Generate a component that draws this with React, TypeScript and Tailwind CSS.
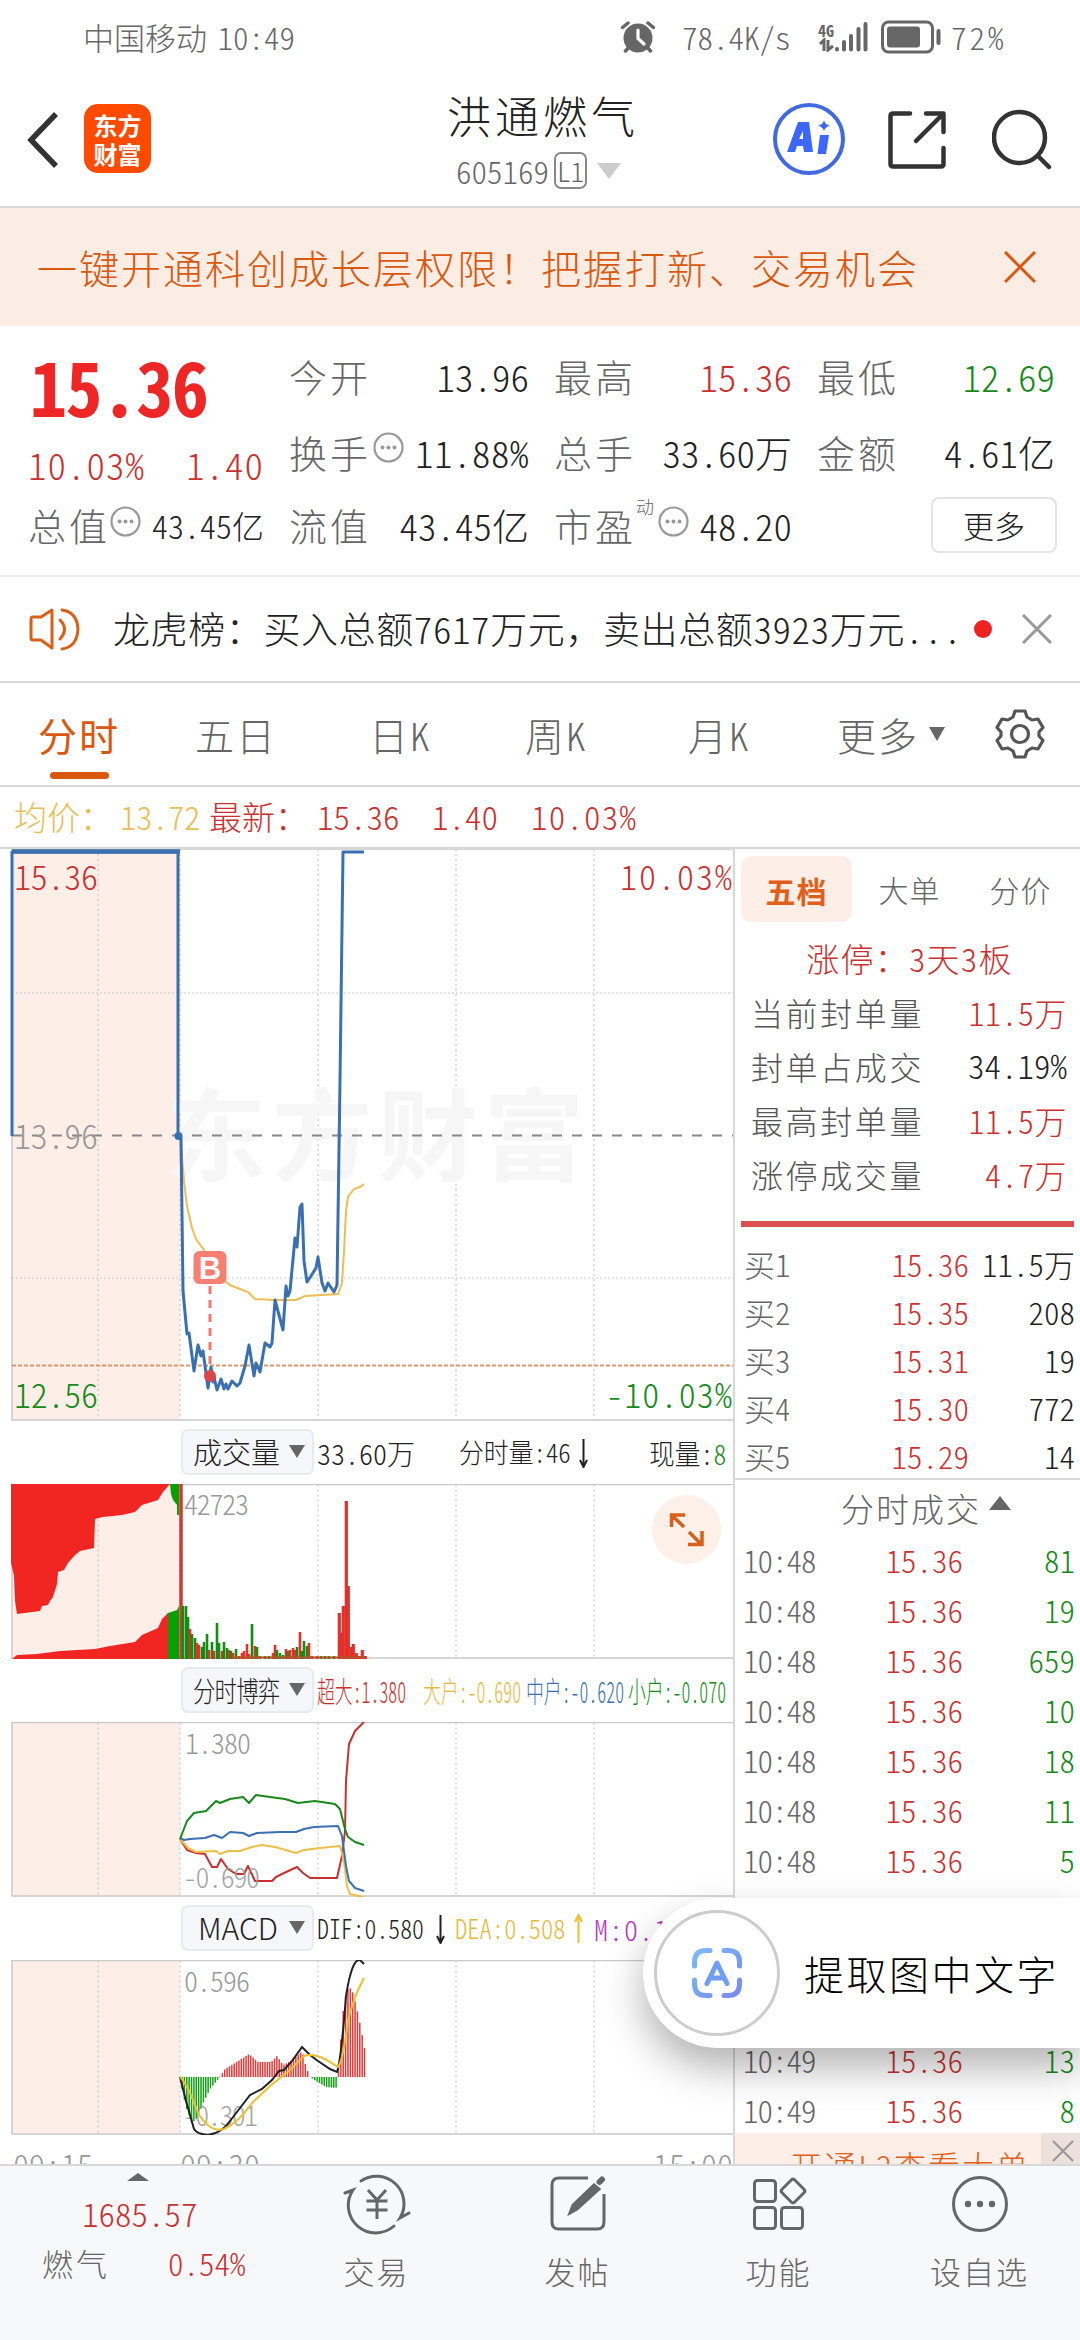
import type { ReactNode } from "react";

type Point = [number, number];

const RED = "#c8312f";
const GREEN = "#16891a";
const BLUE = "#3a70b0";
const YELLOW = "#ecbf4a";
const GRID = "#c9c9c9";

const toPoints = (pts: Point[]) => pts.map((p) => p.join(",")).join(" ");

// main price line
const priceLine: Point[] = [
  [12, 1135], [12, 851], [178, 851], [178, 1135], [181, 1137], [183, 1290], [187, 1333], [189, 1332],
  [194, 1370], [198, 1344], [201, 1355], [203, 1350], [208, 1387], [211, 1366], [213, 1381], [214, 1376],
  [217, 1389], [221, 1378], [224, 1388], [226, 1383], [228, 1388], [232, 1380], [237, 1385], [240, 1382],
  [245, 1365], [249, 1344], [254, 1375], [256, 1362], [260, 1371], [265, 1342], [270, 1346], [272, 1342],
  [275, 1299], [283, 1329], [286, 1285], [288, 1295], [290, 1290], [295, 1237], [297, 1246], [300, 1206],
  [302, 1203], [304, 1260], [307, 1281], [311, 1275], [316, 1267], [318, 1256], [322, 1282], [325, 1290],
  [328, 1282], [334, 1291], [337, 1284], [340, 1080], [343, 851], [364, 851],
];

const avgLine: Point[] = [
  [181, 1145], [184, 1180], [187, 1205], [192, 1227], [196, 1238], [204, 1249], [212, 1264], [222, 1278],
  [230, 1284], [240, 1288], [248, 1291], [255, 1298], [275, 1299], [296, 1299], [305, 1295], [338, 1293],
  [342, 1282], [344, 1250], [346, 1210], [348, 1196], [354, 1188], [360, 1186], [364, 1183],
];

// call auction blocks in the volume chart
const auctionTop: Point[] = [
  [11, 1483], [11, 1562], [14, 1575], [15, 1600], [17, 1613], [40, 1610], [42, 1605], [48, 1604],
  [50, 1600], [53, 1596], [57, 1583], [58, 1571], [64, 1569], [68, 1562], [74, 1555], [80, 1550],
  [94, 1547], [95, 1518], [103, 1516], [122, 1514], [135, 1511], [142, 1504], [158, 1499], [163, 1491],
  [170, 1483],
];
const auctionBottom: Point[] = [
  [12, 1658], [17, 1654], [37, 1653], [60, 1650], [95, 1648], [110, 1645], [135, 1641], [142, 1634],
  [158, 1627], [162, 1618], [168, 1612], [168, 1658],
];

const volumeBars: [number, number, "r" | "g"][] = [
  [183, 1605, "g"], [186, 1605, "g"], [188, 1616, "g"], [190, 1628, "r"], [192, 1633, "g"], [195, 1637, "g"],
  [197, 1642, "r"], [199, 1644, "r"], [202, 1646, "g"], [204, 1641, "g"], [207, 1633, "g"], [209, 1649, "r"],
  [212, 1641, "g"], [214, 1650, "r"], [217, 1622, "g"], [219, 1642, "g"], [222, 1650, "r"], [224, 1641, "g"],
  [227, 1647, "g"], [229, 1649, "r"], [231, 1650, "g"], [233, 1652, "r"], [236, 1648, "g"], [239, 1655, "r"],
  [242, 1652, "r"], [244, 1650, "r"], [247, 1643, "r"], [249, 1653, "r"], [252, 1623, "g"], [255, 1645, "r"],
  [257, 1646, "g"], [260, 1655, "r"], [265, 1655, "g"], [269, 1655, "g"], [273, 1652, "r"], [275, 1644, "r"],
  [277, 1649, "g"], [280, 1652, "g"], [283, 1654, "g"], [286, 1648, "r"], [288, 1650, "g"], [290, 1649, "r"],
  [293, 1647, "r"], [295, 1649, "r"], [297, 1646, "g"], [300, 1631, "r"], [302, 1650, "g"], [304, 1640, "g"],
  [307, 1645, "g"], [309, 1642, "r"], [312, 1655, "r"], [317, 1655, "r"], [321, 1655, "g"], [325, 1655, "g"],
  [329, 1655, "g"], [334, 1655, "g"], [339, 1612, "r"], [341, 1632, "r"], [343, 1605, "r"], [346, 1500, "r"],
  [348, 1585, "r"], [351, 1646, "r"], [353, 1643, "r"], [356, 1652, "r"], [359, 1655, "r"], [362, 1649, "r"],
  [365, 1655, "r"],
];

const smallLine: Point[] = [
  [180, 1838], [187, 1820], [194, 1812], [206, 1810], [216, 1800], [220, 1802], [230, 1798], [243, 1796],
  [249, 1802], [256, 1794], [270, 1796], [285, 1798], [298, 1802], [315, 1800], [335, 1803], [340, 1808],
  [345, 1828], [348, 1836], [355, 1841], [364, 1844],
];
const midLine: Point[] = [
  [180, 1837], [184, 1839], [190, 1838], [205, 1837], [214, 1834], [222, 1837], [230, 1831], [243, 1832],
  [249, 1835], [257, 1832], [280, 1831], [296, 1831], [304, 1828], [314, 1826], [338, 1825], [342, 1835],
  [346, 1865], [349, 1880], [355, 1887], [364, 1890],
];
const bigLine: Point[] = [
  [180, 1838], [188, 1847], [196, 1851], [216, 1850], [220, 1853], [228, 1850], [240, 1850], [252, 1846],
  [262, 1844], [275, 1846], [296, 1852], [304, 1849], [320, 1847], [340, 1845], [344, 1860], [347, 1885],
  [350, 1893], [364, 1896],
];
const superLine: Point[] = [
  [180, 1838], [187, 1849], [196, 1852], [205, 1853], [212, 1866], [217, 1866], [221, 1858], [228, 1868],
  [236, 1873], [244, 1873], [248, 1865], [255, 1880], [272, 1880], [276, 1876], [284, 1872], [297, 1866],
  [303, 1872], [310, 1877], [337, 1877], [342, 1855], [345, 1830], [346, 1780], [349, 1743], [355, 1730],
  [364, 1721],
];

const difLine =
  "M180 2076 L186 2100 194 2128 Q197 2133 208 2134 Q222 2132 230 2120 L240 2107 250 2094 262 2088 272 2079 279 2070 284 2069 292 2060 302 2046 310 2054 318 2060 330 2068 337 2071 Q341 2060 346 1995 Q352 1957 360 1959 L364 1963";
const deaLine =
  "M180 2076 Q188 2084 198 2112 Q210 2132 224 2128 Q238 2122 252 2102 L270 2085 290 2069 304 2055 Q312 2052 325 2058 L338 2066 Q343 2060 348 2020 Q353 1997 364 1977";

// envelope of the MACD histogram, bars are sampled from it
const macdKeys: Point[] = [
  [182, 2088], [186, 2106], [192, 2122], [198, 2116], [203, 2102], [210, 2088], [219, 2077], [225, 2068],
  [235, 2062], [249, 2053], [258, 2061], [271, 2061], [277, 2055], [283, 2064], [291, 2060], [302, 2050],
  [306, 2066], [310, 2076], [316, 2080], [326, 2086], [336, 2087], [339, 2060], [344, 2000], [349, 1985],
  [353, 1992], [358, 2013], [361, 2028], [365, 2050],
];

const macdBars: Point[] = [];
for (let x = 182; x <= 364.5; x += 2.37) {
  const i = Math.max(1, macdKeys.findIndex((k) => k[0] >= x));
  const [x0, y0] = macdKeys[i - 1];
  const [x1, y1] = macdKeys[i];
  macdBars.push([x, y0 + ((x - x0) / (x1 - x0)) * (y1 - y0)]);
}

const bids = [
  ["买1", "15.36", "11.5万"],
  ["买2", "15.35", "208"],
  ["买3", "15.31", "19"],
  ["买4", "15.30", "772"],
  ["买5", "15.29", "14"],
];

const ticks = [
  ["10:48", "81"],
  ["10:48", "19"],
  ["10:48", "659"],
  ["10:48", "10"],
  ["10:48", "18"],
  ["10:48", "11"],
  ["10:48", "5"],
  ["10:48", ""],
  ["10:49", ""],
  ["10:49", ""],
  ["10:49", "13"],
  ["10:49", "8"],
];

function StatusBar() {
  return (
    <div className="h-[74px] flex items-center pl-[83px] text-[31px] text-[#666]">
      <div className="w-[538px] whitespace-nowrap">中国移动<span className="-ml-[5px]"> 10:49</span></div>
      <svg className="w-[34px] h-[32px] shrink-0" viewBox="0 0 34 32" fill="none">
        <circle cx="17" cy="17" r="14.5" fill="#666" />
        <path d="M1.5 6.500 L7 2M32.500 6.500 L27 2M8 26 L4.500 30M26 26 L29.500 30" stroke="#666" strokeWidth="3.500" strokeLinecap="round" />
        <path d="M17 9 V17.500 L23 23" stroke="#fff" strokeWidth="3.200" strokeLinecap="round" />
      </svg>
      <div className="w-[136px] pl-[27px] whitespace-nowrap">78.4K/s</div>
      <div className="w-[26px] pl-[27px] box-content">
        <div className="text-[16px] leading-[15px] font-bold">4G</div>
        <svg className="w-[18px] h-[14px]" viewBox="0 0 18 14" fill="none" stroke="#666" strokeWidth="3">
          <path d="M2 6 L6 2 V13M10 2 V12 L15 8" />
        </svg>
      </div>
      <svg className="w-[34px] h-[32px] -ml-[10px] shrink-0" viewBox="0 0 34 32" fill="none" stroke="#666" strokeWidth="4" strokeLinecap="round">
        <path d="M3 28 V28.500M10 21 V28.500M17 15 V28.500M24.500 8 V28.500M31.500 3 V28.500" />
      </svg>
      <svg className="ml-[13px] w-[60px] h-[34px] shrink-0" viewBox="0 0 60 34" fill="none">
        <rect x="1.500" y="2" width="50" height="30" rx="6" stroke="#666" strokeWidth="3" />
        <rect x="6" y="6.500" width="33" height="21" rx="3" fill="#666" />
        <path d="M57.500 11 V23" stroke="#666" strokeWidth="4" strokeLinecap="round" />
      </svg>
      <div className="pl-[10px] whitespace-nowrap tracking-[3px]">72%</div>
    </div>
  );
}

function Header() {
  return (
    <div className="h-[134px] flex items-center border-b-2 border-[#d8d8d8] pl-[26px] pb-[3px] shrink-0">
      <svg className="w-[34px] h-[58px] shrink-0 mt-[2px]" viewBox="0 0 34 58" fill="none" stroke="#333" strokeWidth="5.500">
        <path d="M30 3 L5 29 L30 55" />
      </svg>
      <div className="ml-[24px] w-[67px] h-[69px] rounded-[14px] bg-[#ff4a00] text-white text-[24px] leading-[29px] font-bold flex flex-col items-center justify-center">
        <span>东方</span>
        <span>财富</span>
      </div>
      <div className="ml-[296px] w-[190px] flex flex-col">
        <div className="text-[44px] leading-[54px] tracking-[4px] whitespace-nowrap text-[#222]">洪通燃气</div>
        <div className="h-[38px] mt-[10px] ml-[9px] flex items-center text-[31px] text-[#666]">
          <span className="leading-[38px]">605169</span>
          <span className="ml-[5px] w-[33px] h-[37px] border-2 border-[#888] rounded-[7px] text-[27px] leading-[33px] text-center">L1</span>
          <span className="ml-[10px] border-x-[12px] border-t-[16px] border-x-transparent border-t-[#ccc]" />
        </div>
      </div>
      <svg className="ml-[136px] w-[72px] h-[72px] shrink-0" viewBox="0 0 72 72" fill="none">
        <circle cx="36" cy="36" r="34" stroke="#4169e0" strokeWidth="4" />
        <path d="M25 19 H36 L40 49 H31 L30 43 H24 L22 49 H14 Z M30 28 L26 36 H30 Z" fill="#3d67fb" fillRule="evenodd" strokeLinejoin="round" />
        <path d="M47 32 H56 L53 51 H44.500 Z" fill="#3d67fb" />
        <path d="M51 17 Q52 22 57 22.500 Q52 24 51 28 Q50 24 45 22.500 Q50 22 51 17Z" fill="#3d67fb" />
      </svg>
      <svg className="ml-[43px] w-[58px] h-[60px] shrink-0 mt-[2px]" viewBox="0 0 58 60" fill="none" stroke="#333" strokeWidth="4.500" strokeLinecap="round" strokeLinejoin="round">
        <path d="M22 3.500 H5 Q2.500 3.500 2.500 6 V54 Q2.500 56.500 5 56.500 H53 Q55.500 56.500 55.500 54 V38M38 3.500 H55.500 V22M54 5 L28 31" />
      </svg>
      <svg className="ml-[46px] w-[60px] h-[62px] shrink-0" viewBox="0 0 60 62" fill="none" stroke="#333" strokeWidth="4.500" strokeLinecap="round">
        <circle cx="27.500" cy="29.500" r="25.500" />
        <path d="M46 48 L57 59" />
      </svg>
    </div>
  );
}

function Dots() {
  return (
    <svg className="w-[31px] h-[31px] shrink-0 -mt-[8px]" viewBox="0 0 31 31" fill="#999">
      <circle cx="15.500" cy="15.500" r="14" fill="none" stroke="#999" strokeWidth="2.200" />
      <circle cx="9.500" cy="15.500" r="2" />
      <circle cx="15.500" cy="15.500" r="2" />
      <circle cx="21.500" cy="15.500" r="2" />
    </svg>
  );
}

function Cell({ label, children, color = "text-[#222]" }: { label: string; children: ReactNode; color?: string }) {
  return (
    <div className="flex items-center justify-between">
      <span className="text-[38px] tracking-[3px] text-[#666]">{label}</span>
      <span className={color}>{children}</span>
    </div>
  );
}

function Quote() {
  return (
    <div className="h-[251px] border-b-2 border-[#ececec] pt-[12px] pl-[28px] grid grid-cols-[236px_240px_238px_238px] gap-x-[25px] grid-rows-[76px_75px_72px] text-[37px] leading-[48px] text-[#222] whitespace-nowrap">
      <div className="row-span-2 flex flex-col">
        <div className="h-[98px] pl-[2px] text-[74px] leading-[94px] tracking-[-1.500px] font-bold text-[#ee2726]">15.36</div>
        <div className="mt-[4px] flex justify-between text-[#c8312f] tracking-[1px]">
          <span>10.03%</span>
          <span>1.40</span>
        </div>
      </div>
      <Cell label="今开">13.96</Cell>
      <Cell label="最高" color="text-[#c8312f]">15.36</Cell>
      <Cell label="最低" color="text-[#16891a]">12.69</Cell>
      <div className="flex items-center">
        <span className="text-[38px] tracking-[3px] text-[#666]">换手</span>
        <span className="ml-[2px]"><Dots /></span>
        <span className="ml-auto tracking-[0.500px]">11.88%</span>
      </div>
      <Cell label="总手">33.60万</Cell>
      <Cell label="金额">4.61亿</Cell>
      <div className="flex items-center">
        <span className="text-[38px] tracking-[3px] text-[#666]">总值</span>
        <Dots />
        <span className="text-[32px] ml-auto">43.45亿</span>
      </div>
      <Cell label="流值">43.45亿</Cell>
      <div className="flex items-center">
        <span className="text-[38px] tracking-[3px] text-[#666]">市盈</span>
        <span className="text-[18px] text-[#666] -mt-[38px]">动</span>
        <span className="ml-[4px]"><Dots /></span>
        <span className="ml-auto">48.20</span>
      </div>
      <div className="flex items-center justify-end">
        <div className="w-[126px] h-[56px] mr-[-2px] border-2 border-[#e4e4e4] rounded-[8px] text-center text-[31px] leading-[52px] text-[#222]">更多</div>
      </div>
    </div>
  );
}

function News() {
  return (
    <div className="h-[106px] border-b-2 border-[#d8d8d8] flex items-center pl-[29px]">
      <svg className="w-[52px] h-[44px] shrink-0" viewBox="0 0 52 44" fill="none" stroke="#d9601a" strokeWidth="3" strokeLinejoin="round" strokeLinecap="round">
        <path d="M23 3 L12 10 H4 Q2 10 2 12 V31 Q2 33 4 33 H12 L23 41 Z" />
        <path d="M31 13 Q40 22 31 32M33 3 Q48 5 49 22 Q48 40 33 42" />
      </svg>
      <div className="ml-[32px] w-[849px] whitespace-nowrap text-[37px] tracking-[0.600px] text-[#222]">
        龙虎榜：买入总额7617万元<span className="[font-feature-settings:normal]">，</span>卖出总额3923万元...
      </div>
      <div className="ml-[12px] size-[18px] rounded-full bg-[#ee2320] shrink-0" />
      <svg className="ml-[30px] w-[30px] h-[30px] shrink-0" viewBox="0 0 30 30" stroke="#999" strokeWidth="3">
        <path d="M1 1 L29 29M29 1 L1 29" />
      </svg>
    </div>
  );
}

function Tabs() {
  return (
    <div className="h-[104px] border-b-2 border-[#d8d8d8] flex pl-[38px] text-[39px] leading-[52px] text-[#666] whitespace-nowrap tracking-[2px]">
      <div className="w-[157px] pt-[25px] text-[#d9570f]">
        <span className="font-normal">分时</span>
        <div className="ml-[12px] mt-[12px] w-[59px] h-[7px] rounded-full bg-[#d9570f]" />
      </div>
      <div className="w-[174px] pt-[25px]">五日</div>
      <div className="w-[156px] pt-[25px]">日K</div>
      <div className="w-[163px] pt-[25px]">周K</div>
      <div className="w-[149px] pt-[25px]">月K</div>
      <div className="w-[157px] flex pt-[25px]">
        更多
        <span className="ml-[10px] mt-[19px] h-0 border-x-[8px] border-t-[14px] border-x-transparent border-t-[#666]" />
      </div>
      <svg className="mt-[25px] w-[52px] h-[52px]" viewBox="0 0 52 52" fill="none" stroke="#555" strokeWidth="3.200" strokeLinejoin="round">
        <path d="M21 3 H31 L33 9 L38 12 L44 11 L49 19.500 L45 24 V28 L49 32.500 L44 41 L38 40 L33 43 L31 49 H21 L19 43 L14 40 L8 41 L3 32.500 L7 28 V24 L3 19.500 L8 11 L14 12 L19 9 Z" />
        <circle cx="26" cy="26" r="8.500" />
      </svg>
    </div>
  );
}

function Frame({ top, bottom }: { top: number; bottom: number }) {
  return (
    <>
      <rect x="12" y={top} width="168" height={bottom - top} fill="#fdeee7" />
      <path d={[98, 180, 318, 456, 594].map((x) => `M${x} ${top} V${bottom}`).join("")} stroke={GRID} strokeWidth="1.200" strokeDasharray="2 3" />
      <path d={`M733 ${top} H12 V${bottom} H733`} fill="none" stroke={GRID} strokeWidth="1.500" />
    </>
  );
}

function IndicatorBar({ name, small, children }: { name: string; small?: boolean; children: ReactNode }) {
  return (
    <div className="h-[63px] pl-[181px] flex items-center text-[29px] text-[#222] whitespace-nowrap">
      <div className="w-[133px] h-[46px] -mt-[2px] shrink-0 rounded-[7px] border-2 border-[#e8eaee] bg-[#f6f7fa] flex items-center justify-between pl-[10px] pr-[7px]">
        <span className={small ? "inline-block w-[88px] text-[28px] tracking-[-1px] origin-left scale-x-[0.8]" : "text-[29px]"}>{name}</span>
        <span className="border-x-[8px] border-t-[13px] border-x-transparent border-t-[#666] shrink-0" />
      </div>
      {children}
    </div>
  );
}

function Arrow({ up, color }: { up?: boolean; color: string }) {
  return (
    <svg className="w-[9px] h-[30px] shrink-0" viewBox="0 0 9 30" fill="none" stroke={color} strokeWidth="2">
      <path d={up ? "M4.500 29 V1M1 8 L4.500 1 L8 8" : "M4.500 1 V29M1 22 L4.500 29 L8 22"} />
    </svg>
  );
}

function Narrow({ w, color, children }: { w: string; color: string; children: ReactNode }) {
  return (
    <div className={`${w} shrink-0`}>
      <span className={`inline-block origin-left scale-x-[0.615] ${color}`}>{children}</span>
    </div>
  );
}

function Charts() {
  return (
    <div className="w-[735px] shrink-0 border-r-2 border-[#d8d8d8]">
      <svg className="block w-[735px] h-[572px]" viewBox="0 848 735 572" fill="none">
        <Frame top={848} bottom={1419} />
        <text x="166" y="1172" fontSize="100" fontWeight="700" fill="#f6f6f6" textLength="418">东方财富</text>
        <path d="M12 992 H733M12 1277 H733" stroke={GRID} strokeWidth="1.200" strokeDasharray="2 2" />
        <path d="M12 1134.500 H733" stroke="#888" strokeWidth="2" strokeDasharray="10 10" />
        <path d="M12 1364.500 H733" stroke="#e0966c" strokeWidth="2" strokeDasharray="4 2" />
        <polyline points={toPoints(avgLine)} stroke="#efbd55" strokeWidth="2" />
        <polyline points={toPoints(priceLine)} stroke={BLUE} strokeWidth="3" strokeLinejoin="round" />
        <path d="M12 850.500 H180" stroke={BLUE} strokeWidth="4.500" />
        <circle cx="178.500" cy="1135" r="4" fill={BLUE} />
        <path d="M210 1285 V1368" stroke="#ee7a6c" strokeWidth="3" strokeDasharray="8 6" />
        <circle cx="210" cy="1375" r="6" fill="#d9474a" />
        <rect x="193.500" y="1250" width="33" height="33" rx="6" fill="#f8796a" fillOpacity="0.950" />
        <text x="210" y="1278" fontSize="31" fontWeight="700" fill="#fff" textAnchor="middle" fontFamily="Liberation Sans">B</text>
        <g fontSize="34">
          <text x="14" y="889" fill={RED} textLength="84">15.36</text>
          <text x="14" y="1148" fill="#999" textLength="84">13.96</text>
          <text x="14" y="1407" fill={GREEN} textLength="84">12.56</text>
          <text x="732" y="889" fill={RED} textAnchor="end" textLength="112">10.03%</text>
          <text x="732" y="1407" fill={GREEN} textAnchor="end" textLength="126">-10.03%</text>
        </g>
      </svg>

      <IndicatorBar name="成交量">
        <div className="ml-[3px] w-[143px] text-[28px]">33.60万</div>
        <div className="w-[120px] text-[27px]"><span className="inline-block origin-left scale-x-[0.92]">分时量:46</span></div>
        <Arrow color="#222" />
        <div className="ml-[61px] text-[28px]"><span className="inline-block origin-left scale-x-[0.92]">现量:<span className="text-[#16891a]">8</span></span></div>
      </IndicatorBar>

      <div className="relative h-[175px]">
        <svg className="block w-[735px] h-[175px]" viewBox="0 1483 735 175" fill="none">
          <Frame top={1483.5} bottom={1657} />
          <polygon points={toPoints(auctionTop)} fill="#f12522" />
          <polygon points="170,1483 179,1483 179,1514 177,1514 177,1504 173,1499 171,1493" fill="#04a004" />
          <polygon points={toPoints(auctionBottom)} fill="#f12522" />
          <polygon points="168,1612 177,1609 179,1605 179,1658 168,1658" fill="#04a004" />
          <path d="M181 1483 V1658" stroke="#cf3a30" strokeWidth="3.500" />
          {volumeBars.map(([x, y, c], i) => (
            <rect key={i} x={x - 1.3} y={y} width={c === "r" && x > 338 ? 3.2 : 2.6} height={1658 - y} fill={c === "r" ? "#e3302a" : "#128f12"} />
          ))}
          <path d="M232 1656.500 H367" stroke="#b0552a" strokeWidth="2" />
          <text x="184" y="1514" fontSize="28" fill="#999" textLength="65">42723</text>
        </svg>
        <div className="absolute left-[652px] top-[11px] size-[69px] rounded-full bg-[#fdf0e9] flex items-center justify-center">
          <svg className="size-[36px]" viewBox="0 0 36 36" fill="none" stroke="#d9601a" strokeWidth="3.500">
            <path d="M2.500 15 V3 H16M3.500 4 L15 15M20 20 L32 32M33 19 V32.500 H19" />
          </svg>
        </div>
      </div>

      <IndicatorBar name="分时博弈" small>
        <Narrow w="w-[106px] ml-[3px]" color="text-[#c8312f] scale-x-[0.68]">超大:1.380</Narrow>
        <Narrow w="w-[103px]" color="text-[#e3b93b]">大户:-0.690</Narrow>
        <Narrow w="w-[102px]" color="text-[#3a70b0]">中户:-0.620</Narrow>
        <Narrow w="w-[90px]" color="text-[#16891a]">小户:-0.070</Narrow>
      </IndicatorBar>

      <svg className="block w-[735px] h-[175px]" viewBox="0 1721 735 175" fill="none">
        <Frame top={1721.5} bottom={1895} />
        <g strokeWidth="2" strokeLinejoin="round">
          <polyline points={toPoints(superLine)} stroke={RED} />
          <polyline points={toPoints(bigLine)} stroke={YELLOW} />
          <polyline points={toPoints(midLine)} stroke={BLUE} />
          <polyline points={toPoints(smallLine)} stroke={GREEN} />
        </g>
        <text x="185" y="1753" fontSize="28" fill="#999" textLength="66">1.380</text>
        <text x="183" y="1887" fontSize="28" fill="#999" fillOpacity="0.900" textLength="77">-0.690</text>
      </svg>

      <div className="h-[63px] pl-[181px] flex items-center text-[29px] text-[#222] whitespace-nowrap">
        <div className="w-[133px] h-[46px] -mt-[2px] shrink-0 rounded-[7px] border-2 border-[#e8eaee] bg-[#f6f7fa] flex items-center justify-between pl-[15px] pr-[7px]">
          <span className="[font-feature-settings:normal] text-[30px]">MACD</span>
          <span className="border-x-[8px] border-t-[13px] border-x-transparent border-t-[#666] shrink-0" />
        </div>
        <div className="ml-[3px] w-[119px] text-[27px]"><span className="inline-block origin-left scale-x-[0.88]">DIF:0.580</span></div>
        <Arrow color="#222" />
        <div className="ml-[10px] w-[119px] text-[27px] text-[#e3b93b]"><span className="inline-block origin-left scale-x-[0.91]">DEA:0.508</span></div>
        <Arrow up color="#ecbf2c" />
        <div className="ml-[11px] w-[140px] overflow-hidden text-[28px] tracking-[1px] text-[#b437c0]">M:0.144</div>
      </div>

      <svg className="block w-[735px] h-[175px]" viewBox="0 1959 735 175" fill="none">
        <Frame top={1959.5} bottom={2133} />
        {macdBars.map(([x, y], i) => (
          <rect key={i} x={x - 0.7} y={Math.min(y, 2076)} width="1.500" height={Math.abs(2076 - y)} fill={y < 2076 ? "#e03a3a" : "#14a014"} />
        ))}
        <text x="184" y="1991" fontSize="28" fill="#999" textLength="66">0.596</text>
        <text x="183" y="2125" fontSize="28" fill="#999" fillOpacity="0.900" textLength="75">-0.301</text>
        <path d={difLine} stroke="#222" strokeWidth="2" />
        <path d={deaLine} stroke="#ecc02c" strokeWidth="2" />
      </svg>

      <div className="flex pl-[13px] pt-[7px] text-[32px] leading-[44px] text-[#999] whitespace-nowrap">
        <span className="w-[167px]">09:15</span>
        <span>09:30</span>
        <span className="ml-auto">15:00</span>
      </div>
    </div>
  );
}

function LimitRow({ label, value, dark }: { label: string; value: string; dark?: boolean }) {
  return (
    <div className="h-[54px] flex items-center justify-between pr-[13px]">
      <span className="w-[189px] text-right text-[32px] tracking-[2.600px] text-[#555]">{label}</span>
      <span className={dark ? "text-[33px] text-[#222]" : "text-[32px] tracking-[0.500px] text-[#c8312f]"}>{value}</span>
    </div>
  );
}

function OrderPanel() {
  return (
    <div className="w-[345px] shrink-0 whitespace-nowrap">
      <div className="flex items-center pt-[7px] pl-[6px] text-[30px] text-[#666] tracking-[1px]">
        <div className="w-[111px] h-[66px] rounded-[10px] bg-[#fdeee7] text-[#e0601a] font-bold text-center leading-[68px]">五档</div>
        <div className="w-[111px] pl-[4px] text-center">大单</div>
        <div className="w-[113px] pl-[2px] text-center">分价</div>
      </div>
      <div className="h-[60px] mt-[7px] pl-[4px] flex items-center justify-center text-[33px] text-[#c8312f] tracking-[1.200px]">涨停：3天3板</div>
      <div className="-mt-[4px]">
        <LimitRow label="当前封单量" value="11.5万" />
        <LimitRow label="封单占成交" value="34.19%" dark />
        <LimitRow label="最高封单量" value="11.5万" />
        <LimitRow label="涨停成交量" value="4.7万" />
      </div>
      <div className="ml-[6px] mr-[6px] mt-[20px] h-[6px] bg-[#dc4f50]" />
      <div className="pt-[13px] text-[31px]">
        {bids.map(([name, price, amount]) => (
          <div key={name} className="h-[48px] flex items-center pl-[9px] pr-[5px]">
            <span className="w-[110px] text-[#666]">{name}</span>
            <span className="w-[115px] text-right text-[#c8312f]">{price}</span>
            <span className="flex-1 text-right text-[#222]">{amount}</span>
          </div>
        ))}
      </div>
      <div className="-mt-[2px] h-[60px] border-t-2 border-[#d8d8d8] flex items-center justify-center pl-[37px] text-[33px] tracking-[2px] text-[#666]">
        分时成交
        <span className="ml-[8px] -mt-[12px] border-x-[11px] border-b-[14px] border-x-transparent border-b-[#666]" />
      </div>
      <div className="-mt-[3px] text-[31px]">
        {ticks.map(([time, amount], i) => (
          <div key={i} className="h-[50px] flex items-center pl-[8px] pr-[5px]">
            <span className="w-[110px] text-[#666] tracking-[-1px]">{time}</span>
            <span className="w-[110px] text-right text-[#c8312f]">15.36</span>
            <span className="flex-1 text-right text-[#16891a]">{amount}</span>
          </div>
        ))}
      </div>
      <div className="-mt-[2px] h-[60px] bg-[#fdeee7] flex">
        <div className="w-[306px] pl-[55px] pt-[11px] text-[32px] leading-[42px] tracking-[2px] text-[#e0601a]">开通L2查看大单</div>
        <div className="flex-1 h-[36px] rounded-bl-[8px] bg-[#ebe0dc] flex items-center justify-center pl-[5px]">
          <svg className="size-[22px]" viewBox="0 0 22 22" stroke="#999" strokeWidth="2.200">
            <path d="M1 1 L21 21M21 1 L1 21" />
          </svg>
        </div>
      </div>
    </div>
  );
}

function NavItem({ label, children }: { label: string; children: ReactNode }) {
  return (
    <div className="w-[201px] flex flex-col items-center text-[31px] tracking-[2px] text-[#666]">
      <svg className="w-[66px] h-[60px] overflow-visible" viewBox="0 0 66 60" fill="none" stroke="#666" strokeWidth="3">
        {children}
      </svg>
      <div className="mt-[15px] leading-[46px]">{label}</div>
    </div>
  );
}

function BottomNav() {
  return (
    <div className="h-[176px] shrink-0 bg-[#f7f8fa] border-t-2 border-[#d8d8d8] flex pt-[7px]">
      <div className="w-[276px] text-[33px] text-[#c8312f] leading-[44px]">
        <div className="ml-[127px] w-0 border-x-[11px] border-b-[8px] border-x-transparent border-b-[#666]" />
        <div className="ml-[82px] mt-[10px]">1685.57</div>
        <div className="ml-[42px] mt-[6px] flex">
          <span className="w-[126px] text-[31px] tracking-[3px] text-[#666]">燃气</span>
          <span className="text-[31px]">0.54%</span>
        </div>
      </div>
      <NavItem label="交易">
        <path d="M17 8 A27.500 27.500 0 0 1 56 45 L65 40" strokeLinecap="round" />
        <path d="M50 53 A27.500 27.500 0 0 1 9 17 L1 20" strokeLinecap="round" />
        <path d="M24 17 L33 27 L42 17M22.500 28 H43.500M22.500 37 H43.500M33 27 V46" />
      </NavItem>
      <NavItem label="发帖">
        <path d="M43 5 H14 Q7 5 7 12 V49 Q7 56 14 56 H52 Q59 56 59 49 V21" />
        <path d="M49 12 L54 16 L32 36 L25 40 L28 32 Z" fill="#666" />
        <path d="M54.500 9 L57 6.500" strokeWidth="6" strokeLinecap="round" />
      </NavItem>
      <NavItem label="功能">
        <rect x="8.500" y="7.500" width="21" height="21" rx="3" />
        <rect x="8.500" y="34.500" width="21" height="21" rx="3" />
        <rect x="35.500" y="34.500" width="21" height="21" rx="3" />
        <rect x="38" y="9" width="18" height="18" rx="2.500" transform="rotate(45 47 18)" />
      </NavItem>
      <NavItem label="设自选">
        <circle cx="33" cy="31" r="26.500" />
        <g fill="#666" stroke="none">
          <circle cx="21" cy="31" r="3.200" />
          <circle cx="33" cy="31" r="3.200" />
          <circle cx="45" cy="31" r="3.200" />
        </g>
      </NavItem>
    </div>
  );
}

// floating system button over the page
function ExtractButton() {
  return (
    <div className="absolute left-[643px] top-[1898px] w-[437px] h-[150px] rounded-l-full bg-white shadow-[0_20px_40px_rgba(0,0,0,0.300)] flex items-center">
      <div className="ml-[11px] size-[126px] rounded-full border-[3px] border-[#ccc] flex items-center justify-center shrink-0">
        <svg className="size-[52px]" viewBox="0 0 52 52" fill="none" stroke="url(#scan)" strokeWidth="5" strokeLinecap="round">
          <defs>
            <linearGradient id="scan" gradientUnits="userSpaceOnUse" x1="0" y1="0" x2="52" y2="52">
              <stop offset="0" stopColor="#80bdf5" />
              <stop offset="0.500" stopColor="#76a2f4" />
              <stop offset="1" stopColor="#7a86ec" />
            </linearGradient>
          </defs>
          <path d="M3.500 19 V15 Q3.500 3.500 15 3.500 H19M33 3.500 H37 Q48.500 3.500 48.500 15 V19M48.500 33 V37 Q48.500 48.500 37 48.500 H33M19 48.500 H15 Q3.500 48.500 3.500 37 V33" />
          <path d="M16 36.500 L26 16 L36 36.500M20 31 H32" stroke="#719df5" strokeLinejoin="round" />
        </svg>
      </div>
      <div className="ml-[24px] text-[40px] tracking-[2.500px] text-black whitespace-nowrap">提取图中文字</div>
    </div>
  );
}

export default function App() {
  return (
    <div className="relative w-[1080px] h-[2340px] bg-white overflow-hidden flex flex-col font-light font-['Noto_Sans_CJK_SC',sans-serif] [font-feature-settings:'hwid']">
      <StatusBar />
      <Header />
      <div className="h-[118px] shrink-0 bg-[#fcede4] flex items-center pl-[37px] text-[#d9570f]">
        <div className="w-[967px] text-[40px] tracking-[2px] whitespace-nowrap">一键开通科创成长层权限！把握打新、交易机会</div>
        <svg className="w-[32px] h-[32px] shrink-0" viewBox="0 0 32 32" stroke="#d9570f" strokeWidth="3">
          <path d="M1 1 L31 31M31 1 L1 31" />
        </svg>
      </div>
      <Quote />
      <News />
      <Tabs />
      <div className="h-[62px] shrink-0 border-b-2 border-[#d8d8d8] flex items-center pl-[14px] text-[33px] text-[#c8312f] whitespace-nowrap">
        <span className="w-[106px] text-[#e9bd55]">均价：</span>
        <span className="w-[89px] text-[#e9bd55] tracking-[-0.500px]">13.72</span>
        <span className="w-[108px]">最新：</span>
        <span className="w-[115px]">15.36</span>
        <span className="w-[99px]">1.40</span>
        <span className="tracking-[1.200px]">10.03%</span>
      </div>
      <div className="flex h-[1315px] shrink-0 overflow-hidden">
        <Charts />
        <OrderPanel />
      </div>
      <BottomNav />
      <ExtractButton />
    </div>
  );
}
